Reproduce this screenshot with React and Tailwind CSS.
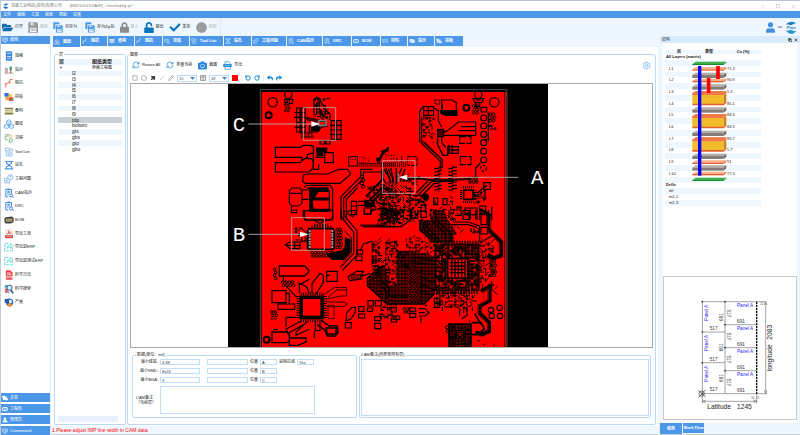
import React, { useState } from 'react';
import { FaFolderOpen, FaLock, FaUnlock, FaCheck, FaCircle, FaUser, FaReply, FaShare, FaCamera } from 'react-icons/fa';
import { Settings, RotateCcw, RotateCw, RefreshCw, Pencil, Square, Circle, ArrowUpRight, X, Minus, Copy } from 'lucide-react';

const MENUS = ['文件', '编辑', '工具', '报表', '帮助', '设置'];

const SIDE_ITEMS = [
  ['spec', '规格'],
  ['guide', '指示'],
  ['imp', '阻抗'],
  ['panel', '拼板'],
  ['stack', '叠构'],
  ['layer', '图纸'],
  ['flow', '流程'],
  ['tool', 'Tool List'],
  ['drill', '钻孔'],
  ['eq', '工程问题'],
  ['clip', 'CAM指示'],
  ['clip', 'DRC'],
  ['bom', 'BOM'],
  ['pdf', '导出工单'],
  ['share', '导出到ERP'],
  ['share', '导出到测试ERP'],
  ['log', '料号日志'],
  ['search', '料号搜索'],
  ['yield', '产量'],
];

const SIDE_GROUPS = [
  ['panel', '会签'],
  ['bom', '工程库'],
  ['user', '管理员'],
  ['monitor', 'Customized'],
];

const TABS = [
  { icon: 'layer', label: '图纸', width: 'w-[27px]' },
  { icon: 'imp', label: '阻抗', width: 'w-[26px]' },
  { icon: 'stack', label: '叠构', width: 'w-[26px]' },
  { icon: 'imp', label: '阻抗', width: 'w-[27px]' },
  { icon: 'flow', label: '流程', width: 'w-[26px]' },
  { icon: 'tool', label: 'Tool List', width: 'w-[33px]' },
  { icon: 'drill', label: '钻孔', width: 'w-[27px]' },
  { icon: 'eq', label: '工程问题', width: 'w-[34px]' },
  { icon: 'clip', label: 'CAM指示', width: 'w-[35px]' },
  { icon: 'clip', label: 'DRC', width: 'w-[28px]' },
  { icon: 'bom', label: 'BOM', width: 'w-[28px]' },
  { icon: 'mat', label: '材料', width: 'w-[26px]' },
  { icon: 'flag', label: '指示', width: 'w-[26px]' },
  { icon: 'panel', label: '拼板', width: 'w-[28px]' },
];

const LAYERS = ['l2', 'l3', 'l4', 'l5', 'l6', 'l7', 'l8', 'l9', 'top', 'bottom', 'gts', 'gbs', 'gto', 'gbo'];

const COPPER = ['71.3', '90.9', '5.3', '85.1', '84.3', '84.3', '85.7', '5.7', '91', '77.3'];

const BLUE = '#4d97e8';

/* Shapes for the small module icons, 27 x 27. `mono` draws them in one colour for the tab strip. */
function ModIcon({ name, mono, className }) {
  const c = (color) => mono || color;
  const shapes = {
    spec: (
      <g>
        <rect x="5" y="1" width="17" height="25" rx="2" fill={c('#3b86e0')} />
        <path d="M8 6h11M8 15h11" stroke="#cfe4fb" strokeWidth="3" />
        <path d="M8 20h11" stroke="#fff" strokeWidth="1.5" />
      </g>
    ),
    guide: (
      <g>
        <path d="M4 5v17M1 22h25" stroke={c('#9a9a9a')} strokeWidth="2" />
        <path d="M8 8v14" stroke={c('#c98f8f')} strokeWidth="4" />
        <path d="M15 4h6v11h-6z" fill={c('#3f9a86')} />
        <path d="M18 14v9" stroke={c('#b35a5a')} strokeWidth="3" />
      </g>
    ),
    imp: (
      <g fill="none" stroke={c('#f0564a')} strokeWidth="2.5" strokeLinecap="round">
        <path d="M5 25c2-5-3-7 1-10l8-3 3-8h5" />
        <path d="M12 12l5 2M3 16h3" />
      </g>
    ),
    panel: (
      <g>
        <rect x="1" y="3" width="12" height="10" rx="2" fill={c('#3b6fe0')} />
        <rect x="13" y="6" width="8" height="8" fill={c('#f7c52c')} />
        <rect x="4" y="13" width="9" height="9" fill={c('#f7a72c')} />
        <rect x="13" y="14" width="12" height="10" rx="2" fill={c('#e2474b')} />
        <rect x="20" y="17" width="5" height="5" fill={c('#40b25f')} />
      </g>
    ),
    stack: (
      <g>
        <path d="M2 5h23v4H2zM2 19h23v4H2z" fill={c('#7d7f45')} />
        <path d="M2 10h23v3H2zM2 15h23v3H2z" fill={c('#b7ad5e')} />
      </g>
    ),
    layer: (
      <g fill="none" stroke={c(BLUE)} strokeWidth="2">
        <path d="M13 2l6 4v7l-6 3-6-3V6zM7 13l6 4v6l-6 3-6-3v-6zM20 13l6 4v6l-6 3-6-3v-6z" />
        <path d="M7 6l6 3 6-3M13 9v7M1 17l6 3 6-3M14 17l6 3 6-3" strokeWidth="1.5" />
      </g>
    ),
    flow: (
      <g fill="none" strokeWidth="2.5">
        <path d="M2 5h12M8 5v5H3v8h8" stroke={c('#7ab88a')} />
        <circle cx="17" cy="9" r="4" stroke={c('#e7b76a')} />
        <path d="M14 18l5-3 5 4-3 5-6 1z" stroke={c('#62b57c')} />
      </g>
    ),
    tool: (
      <g fill="none" stroke={c('#79b1ec')} strokeWidth="2">
        <path d="M3 3h12v7H3zM6 10v14h8M15 13l5-9 4 3-3 8" />
        <circle cx="18" cy="20" r="5" />
        <path d="M9 14h4M9 19h4M16 20h4" />
      </g>
    ),
    drill: (
      <g fill="none" stroke={c(BLUE)} strokeWidth="3">
        <path d="M2 4h23M2 24h23M7 5v4l5 3v4l-6 3v4M20 5v4l-5 3v4l6 3v4" />
      </g>
    ),
    eq: (
      <g fill="none" stroke={c('#6fa8e0')} strokeWidth="2">
        <circle cx="17" cy="9" r="7" />
        <path d="M14 7c2-4 7-1 4 2l-1 3M10 12H2v12h13v-7M5 17h6M5 20h4" />
      </g>
    ),
    clip: (
      <g fill="none" stroke={c('#2f7fe0')} strokeWidth="2.5">
        <path d="M12 24H5V4h15v11M9 3h7M9 9h7M9 13h7M9 17h3" />
        <circle cx="19" cy="20" r="4" />
        <path d="M22 23l4 3" />
      </g>
    ),
    bom: (
      <g>
        <path d="M4 6l18-2 4 5v10l-7 4H4l-3-4v-9z" fill={c('#3f4a48')} />
        <path d="M5 10h17v8H5z" fill={mono ? BLUE : '#d6a05a'} />
        <path d="M8 12h4v4H8zM15 12h4v4h-4z" fill={c('#2f9aa8')} />
      </g>
    ),
    pdf: (
      <g>
        <path d="M5 1h12l6 6v19H5z" fill="#f3eaea" stroke="#c9bcbc" />
        <path d="M9 13c5-2 6-9 4-8s2 8 7 7c-4-2-8 0-11 1z" fill="none" stroke="#d54a45" strokeWidth="2" />
        <path d="M3 17h21v7H3z" fill="#cf3733" />
        <path d="M7 20h13" stroke="#fff" strokeWidth="2" strokeDasharray="3 2" />
      </g>
    ),
    share: (
      <g fill="none" stroke="#3fd2d2" strokeWidth="2">
        <path d="M12 4H2v20h21v-9" strokeDasharray="9 2" />
        <path d="M9 17c0-7 4-9 9-9V4l7 7-7 6v-4c-4 0-6 1-9 4z" />
      </g>
    ),
    log: (
      <g>
        <path d="M5 1h12l6 6v19H5z" fill="#e8474b" />
        <path d="M8 8h10M8 12h12" stroke="#fff" strokeWidth="2" />
        <path d="M3 16h22v6H3z" fill="#fbdcdc" />
        <path d="M6 19h15" stroke="#d8383c" strokeWidth="2" />
      </g>
    ),
    search: (
      <g>
        <path d="M2 3h9v7H2z" fill="#38b0b8" />
        <path d="M3 12h7v12H3z" fill="#e4574f" />
        <circle cx="15" cy="10" r="7" fill="#d9f0fb" stroke="#23528f" strokeWidth="2.5" />
        <path d="M18 16l7 9" stroke="#23528f" strokeWidth="4" />
        <path d="M10 18l4 7" stroke="#4d97e8" strokeWidth="3" />
      </g>
    ),
    yield: (
      <g>
        <circle cx="15" cy="14" r="10" fill="#2e6fb5" />
        <path d="M15 14L8 24a12 12 0 0 0 15-2z" fill="#f0932c" />
        <path d="M2 5h10v11H2z" fill="#31589a" />
        <path d="M14 8h7v8h-7z" fill="#e7eef6" />
      </g>
    ),
    user: (
      <g fill={c(BLUE)}>
        <circle cx="13" cy="8" r="6" />
        <path d="M2 24c0-9 6-9 11-9s12 0 12 9z" />
      </g>
    ),
    monitor: (
      <g fill="none" stroke={c(BLUE)} strokeWidth="2">
        <path d="M2 4h23v14H2zM8 24h11M13 18v6M6 9h8M6 13h5" />
        <circle cx="18" cy="11" r="3" />
      </g>
    ),
    mat: (
      <path d="M3 5v16M8 5v16M3 8h5M3 17h5M13 3v20M18 5v16M24 5v16M18 8h6M18 17h6" fill="none" stroke={c(BLUE)} strokeWidth="2" />
    ),
    flag: <path d="M2 4h16l3 4h5v14H10l-2-3H2z" fill={c(BLUE)} />,
  };
  return <svg viewBox="0 0 27 27" className={className} aria-hidden="true">{shapes[name]}</svg>;
}

function DiskIcon({ color, double }) {
  return (
    <svg viewBox="0 0 30 33" className="h-[11px] w-[10px] shrink-0" aria-hidden="true">
      {double && <path d="M1 1h18v6H7v14H1z" fill={color} />}
      <g transform={double ? 'translate(8 9) scale(.7)' : 'translate(0 0)'}>
        <path d="M1 1h25l4 4v27H1z" fill={color} />
        <path d="M8 2h13v8H8zM6 17h19v13H6z" fill="#eef7ff" />
        <path d="M16 3h3v6h-3zM9 21h13M9 25h13" fill={color} stroke={color} strokeWidth="2" />
      </g>
    </svg>
  );
}

function BrandLogo() {
  return (
    <svg viewBox="0 0 36 39" className="h-[13px] w-[12px]" aria-hidden="true">
      <path d="M3 12C8 0 28-1 34 8c-8-3-12 6-20 4-5-1-8-2-11 0z" fill="#1f7fc4" />
      <path d="M3 28c6 14 25 13 31 1-8 4-12-4-19-2-5 2-8 3-12 1z" fill="#2b93cf" />
      <text x="18" y="25" textAnchor="middle" fontSize="13" fontWeight="bold" fill="#2b7fc0">Plan</text>
    </svg>
  );
}

function AppMark() {
  return (
    <svg viewBox="0 0 18 18" className="h-[6px] w-[6px]" aria-hidden="true">
      <path d="M2 7C3 1 13 0 17 4c-4 0-6 4-9 3S4 6 2 7zM1 11c2 8 13 8 16 2-4 1-5-2-8-2s-5 2-8 0z" fill="#1d74bd" />
      <path d="M2 8h8v2H2z" fill="#1d74bd" />
    </svg>
  );
}

/* ---------- Board artwork ---------- */

function makeRandom(seed) {
  let s = seed;
  return () => {
    s = (s * 16807) % 2147483647;
    return s / 2147483647;
  };
}

// Dense fan-out area: vias, pads and short tracks on a coarse grid
function Scatter({ x, y, w, h, seed, density = 0.8, step = 9, color = '#000' }) {
  const rand = makeRandom(seed);
  let d = '';
  for (let py = y; py < y + h; py += step) {
    for (let px = x; px < x + w; px += step) {
      const r = rand();
      const k = rand();
      if (r > density) continue;
      if (k < 0.3) d += `M${px} ${py}h5v5h-5z`;
      else if (k < 0.5) d += `M${px} ${py}l${step} ${step}`;
      else if (k < 0.7) d += `M${px} ${py}l${step} ${-step}`;
      else if (k < 0.85) d += `M${px} ${py}v${step + 3}`;
      else d += `M${px} ${py}h${step + 4}`;
    }
  }
  return <path d={d} stroke={color} strokeWidth="3" fill="none" />;
}

function Vias({ x, y, cols, rows, step = 10, r = 4, width = 3 }) {
  const list = [];
  for (let j = 0; j < rows; j++) {
    for (let i = 0; i < cols; i++) {
      list.push(<circle key={`${i}-${j}`} cx={x + i * step + (j % 2) * 3} cy={y + j * step} r={r} />);
    }
  }
  return <g fill="none" stroke="#000" strokeWidth={width}>{list}</g>;
}

function BoardTopLeft() {
  return (
    <g transform="translate(-6 -12)" fill="none" stroke="#000" strokeWidth="3.5">
      <circle cx="140" cy="67" r="14" />
      <circle cx="128" cy="106" r="9" strokeWidth="6" />
      <circle cx="187" cy="44" r="11" />
      <path d="M174 58h28M176 58v10h8v-8M190 60v10h10v-10" />
      <Vias x={178} y={74} cols={2} rows={3} step={9} r={3} />
      <path d="M212 84h10v72h-10zM226 84h12v72h-12zM204 112h34M206 98h30M206 142h30M212 128h26" />
      <path d="M264 104V60l8-8 10 4 4 14 12 10M272 104V70l8-4v20l14 20M280 100l22 14M262 76h20M290 82l22 20v18M298 76v30" strokeWidth="4" />
      <path d="M236 112l44 12h20v10l-20 4h-30v18h24l12-14 20-4" />
      <path d="M240 112l40 8v6l-36-6z" fill="#500" stroke="#300" />
      <path d="M256 136h24v16h-24z" fill="#000" />
      <Scatter x={264} y={56} w={44} h={60} seed={31} density={0.6} />
      <Vias x={226} y={160} cols={4} rows={2} step={10} r={3} />
      <path d="M316 122h12v56h-12zM332 122h13v56h-13zM312 136h36M312 150h36M312 164h36" />
      <path d="M282 182h14v10h-14zM300 182h12v10h-12z" />
      <path d="M148 202H224L232 196H255L263 204V218L244 224V232L228 240V232H148Z" />
      <path d="M148 248H222L236 236H256L262 244V262L250 276H148Z" />
      <path d="M262 196v72h16v-16M268 232h26M296 218h26v30h-26z" />
      <path d="M272 204h30v10h-12v14h-16z" fill="#000" />
      <path d="M232 286L240 282H306L338 268H364L372 276V284L342 310H238L230 304Z" />
      <path d="M368 230h26v28h-26z" strokeWidth="3" />
      <path d="M372 238h20M400 232h14v16h-14M418 236h10v10" strokeWidth="2" strokeDasharray="4 3" />
      <path d="M190 332l8-8h24l6 10v36l-10 8h-20l-8-8zM196 380v18h18M190 340h38M226 330h20M228 358h20" />
      <path d="M234 322l8-6h70l8 10v64h-10v-56l-6-10h-62" />
      <path d="M250 324h56v10h-30l-12 20h44v6h-50l4 28h46v6h-56z" fill="#000" />
      <path d="M236 392h84v28h-84z" />
      <path d="M345 420V350L404 290V268H440M353 420V354L412 296V276H466M361 420V358L396 322" />
      <path d="M398 256h80" strokeWidth="12" stroke="#400" strokeDasharray="3 3" />
      <path d="M398 250h112M478 256h32" strokeWidth="2" />
      <path d="M452 244L488 202M458 248L474 214M450 236h14M470 212h18" strokeWidth="5" />
      <path d="M480 222v20M488 226h18M494 236h14" strokeDasharray="3 4" />
      <path d="M420 350L468 300V268M430 360L474 320M440 364l30-30" strokeWidth="6" />
      <path d="M476 266c0 20 20 20 18 44M488 266c0 20 16 24 14 40M470 270v24l10 16" strokeWidth="4" />
      <Vias x={408} y={290} cols={1} rows={4} r={5} />
      <Scatter x={424} y={318} w={40} h={40} seed={19} density={0.9} />
      <Scatter x={462} y={314} w={48} h={104} seed={7} density={0.95} />
      <path d="M376 364h16v40h-16zM376 378h18M370 392h20M396 364h20v12h-20M414 384h22v18h-22zM420 362h24v16h-24z" />
      <path d="M418 360l14 10 12-10v20h-26z" fill="#000" />
      <Scatter x={440} y={360} w={26} h={30} seed={77} />
    </g>
  );
}

function BoardTopRight() {
  return (
    <g transform="translate(459 -12)" fill="none" stroke="#000" strokeWidth="3.5">
      <circle cx="340" cy="67" r="14" />
      <circle cx="256" cy="83" r="9" strokeWidth="6" />
      <circle cx="292" cy="44" r="11" />
      <path d="M276 56h32l-6 12h-20zM284 60h16M284 68v12h12V66" />
      <Vias x={278} y={78} cols={2} rows={3} r={4} />
      <path d="M300 82h17v14h-17z" />
      {[114, 138, 163, 188, 214, 240].map((cy) => <circle key={cy} cx="308" cy={cy} r="9" />)}
      <circle cx="308" cy="265" r="9" strokeDasharray="8 5" />
      <Vias x={328} y={102} cols={2} rows={3} r={4} />
      <Vias x={332} y={146} cols={2} rows={1} r={3} />
      <path d="M322 98v84M318 176l-8 8M322 138h14" strokeWidth="4" />
      <path d="M162 60h14v12h-14z" strokeDasharray="5 3" />
      <path d="M128 80h30v26h-30zM128 92h30M142 80v26" />
      <path d="M126 80l-10 14v90l62 60v28M132 108l-10 8v66l62 58v24" />
      <path d="M130 186l54 54v20" strokeWidth="5" stroke="#300" />
      <path d="M182 60h32l12 8v34h-44zM184 72v20" />
      <path d="M178 92h50v14h-34l-14-6z" fill="#000" />
      <path d="M160 84l12 8v30l10 20" />
      <path d="M284 126H232L200 152 178 160M284 166H232L180 166M284 126v40M240 140h44M232 152h52" />
      <path d="M170 148h18v22h-18z" fill="#400" />
      <Scatter x={126} y={112} w={36} h={62} seed={5} density={0.8} />
      <path d="M236 170h34v20h-34zM238 230h32v24h-32z" strokeDasharray="20 4" />
      <path d="M170 172v22l16 32h14v-26h32v20h-28M182 172v16l12 14M204 194v28M214 194v28M200 210h34" strokeWidth="4" />
      <Vias x={156} y={188} cols={2} rows={1} r={1} width={2} />
      {[266, 276, 286, 296, 310, 320, 330].map((y) => (
        <path key={y} d={`M160 ${y}h10l4-4h8M202 ${y}h10l4-4h12`} />
      ))}
      <path d="M174 260v76M214 256v78" strokeWidth="2" />
      <path d="M74 296h50l20 4h74l50-4" strokeWidth="6" stroke="#200" />
      <path d="M112 344l40-40h66M118 352l42-42M106 338l34-34" strokeWidth="4" />
      <path d="M284 292v-28l14-14M272 292h16v12" strokeWidth="4" />
      <Vias x={264} y={296} cols={3} rows={2} r={4} />
      <path d="M248 330h28v28h-28z" strokeWidth="5" />
      <path d="M240 330v30M284 330v30M246 322h32M246 366h32" strokeWidth="6" strokeDasharray="3 3" />
      <path d="M308 308h20v20h-20zM318 316l-30 24M312 330v20" strokeWidth="4" />
      <Scatter x={280} y={336} w={36} h={40} seed={14} density={0.8} />
      <path d="M158 354h12v20h-12zM166 372l-8-10M186 356h12v18h-12zM208 350l8 4M206 364h8v10" />
      <path d="M100 360h18l16 14v20h-20l-14 20M96 346h30" strokeWidth="4" />
      <path d="M124 350c8-14 20-8 18 4s-14 8-18-4z" fill="#000" />
      <Scatter x={84} y={346} w={52} h={74} seed={42} density={0.55} />
      <path d="M80 230h28v26h-28zM62 228v22M48 234v10" strokeWidth="3" strokeDasharray="12 3" />
      <path d="M0 254h76" strokeWidth="14" stroke="#400" strokeDasharray="3 3" />
      <path d="M0 224l22-20M0 216l14-6" strokeWidth="5" />
      <path d="M16 264c0 22 14 20 10 44M30 264c0 20 12 24 4 44M46 264v44M62 264c0 16-20 20-14 40M72 266l-14 40" strokeWidth="4" />
      <Scatter x={4} y={316} w={84} h={104} seed={99} density={0.85} />
      <Scatter x={66} y={290} w={50} h={22} seed={8} density={0.7} />
      <Scatter x={148} y={388} w={44} h={32} seed={17} density={0.95} />
      <Scatter x={200} y={380} w={40} h={40} seed={28} density={0.6} />
      <path d="M252 384h16v16h-16zM270 384h18v36M296 378h18v14h-18zM296 400h20v18h-20zM248 404h18v16" />
      <path d="M332 380v40M322 390v30" strokeWidth="4" />
    </g>
  );
}

function BoardBottomLeft() {
  return (
    <g transform="translate(-6 378)" fill="none" stroke="#000" strokeWidth="3.5">
      <path d="M232 0v22l8 8h70l10-8V0M262 30l20 10 20-10" />
      <path d="M196 0h16v8" />
      <path d="M248 56h74v62h-74z" fill="#f00" strokeWidth="5" />
      <path d="M248 60v56M322 60v56" stroke="#000" strokeWidth="12" />
      <path d="M251 60v56M319 60v56" stroke="#999" strokeWidth="6" strokeDasharray="6 2" />
      <path d="M256 50h60M264 44h42" strokeWidth="6" strokeDasharray="4 4" />
      <Vias x={334} y={58} cols={2} rows={7} step={9} r={4} />
      <Scatter x={208} y={54} w={36} h={40} seed={61} density={0.6} />
      <path d="M178 104l14-8h30v20h-30zM206 96v20M180 106h40" />
      <path d="M304 132l46-10 8-14V84l14 6v36l-20 22h-34z" fill="#000" />
      <path d="M356 62l20 22v44l-24 26" strokeWidth="3" />
      <Vias x={258} y={128} cols={7} rows={2} step={10} r={4} />
      <path d="M345 0V20L383 66V130L343 172M354 0V16L393 62V136L350 180" />
      <path d="M366 0v12l14 8 10-12M416 0v12h18V0" />
      <path d="M402 46h70l20-14h20M410 50h100" strokeWidth="5" stroke="#300" />
      <Scatter x={456} y={2} w={56} h={40} seed={12} density={0.95} />
      <path d="M402 124l10-22 26-8M392 120h18v12h-18zM390 138h18v14h-18z" />
      <Scatter x={438} y={92} w={20} h={110} seed={3} density={1} />
      <Scatter x={484} y={94} w={28} h={90} seed={4} density={0.8} />
      <path d="M424 204L462 170H484L512 182V284H486L424 228Z" fill="url(#dense)" />
      <Scatter x={438} y={150} w={50} h={64} seed={55} density={0.7} />
      <path d="M366 200l26-16h20l-10 24-30 4zM402 200l30-10" />
      <Vias x={376} y={196} cols={4} rows={2} step={9} r={3} />
      <path d="M160 168h76l12 12v6l-12 12H160z" strokeWidth="4" />
      <Vias x={146} y={178} cols={1} rows={4} step={9} r={4} />
      <Vias x={170} y={216} cols={4} rows={2} step={10} r={4} />
      <path d="M302 184h32v30h-32zM302 196h10M172 198v14" />
      <path d="M222 258h70v68h-70z" fill="#000" />
      <path d="M231 267h52v50h-52z" fill="#f00" stroke="none" />
      <path d="M224 252h68M224 332h68" strokeWidth="9" strokeDasharray="3 4" />
      <path d="M216 258v70M298 258v70" strokeWidth="9" strokeDasharray="3 4" />
      <path d="M138 242h42v36h-42zM180 250h10v30M156 282h50v16h-50zM180 322h30M180 322v28" />
      <path d="M258 250v-30l24-30 10 6v22l-22 34M250 250l-8-20-26-12M220 250v-26l30-16M212 262l-30-32" />
      <path d="M290 256l36-24h36v8h-30l-26 22M300 268l44-10h18v-18M302 276h52l10 6-12 8h-50" strokeWidth="2.5" />
      <path d="M306 286h18v40h-18z" strokeWidth="2" />
      <path d="M226 332l-46 26 6 12 46-26M244 334l-34 32v10l40-18M268 334v28h14v-26M265 384v-20" />
      <path d="M284 330l26 18h24l2 20-8 10h-24l-8-18-22-16M300 354h30v18h-26z" strokeWidth="4.5" />
      <path d="M362 308l16-16h10v14l-14 22-14 4zM358 338h18v16h-18zM398 290h16v14h-16zM398 312h18v12h-18z" />
      <path d="M426 272h16v16h-16zM448 272h18v16h-18zM424 294h16v10h-16zM446 320h18v12h-18zM446 340h18v16h-18zM496 324h16v12h-16z" />
      <Scatter x={462} y={292} w={44} h={36} seed={71} density={0.7} />
      <Vias x={138} y={306} cols={2} rows={2} step={10} r={4} />
      <Vias x={138} y={326} cols={2} rows={1} step={10} r={3} width={2} />
      <path d="M138 366h44l8 8v18l-8 6h-44zM142 358h14M190 384h50v12l-24 10H190z" strokeWidth="4" />
      <circle cx="122" cy="389" r="9" strokeWidth="6" />
    </g>
  );
}

function BoardBottomRight() {
  return (
    <g transform="translate(459 378)" fill="none" stroke="#000" strokeWidth="3.5">
      <Scatter x={0} y={0} w={72} h={44} seed={23} density={0.95} />
      <path d="M0 50h62l26-20V0M92 0v24h18V0" strokeWidth="4" />
      <path d="M120 0v22h16V0M204 0v24M246 2h18v26h-18zM268 0v28M284 0v28M222 0h18v16h-18M250 14h36" />
      <path d="M114 32L150 30l10-30 30 0 10 28 18 26v44h-56L114 62Z" fill="url(#dense)" stroke="none" />
      <path d="M118 32v28l44 40M128 32v24l44 42M138 30v22l42 44M150 30l44 40v24M162 0l4 30 42 40v26M148 14l8 24" strokeWidth="4" />
      <path d="M216 36h46l34 12v46M212 44h50l26 8" />
      <path d="M296 0l28 16v44l36 36v40l-24 8-16-10" strokeWidth="13" />
      <path d="M298 4l22 14v44l36 38v32l-20 6M328 18v38l36 36" strokeWidth="2.5" stroke="#a00" />
      <path d="M300 14h18v30h-18z" fill="#f00" />
      <path d="M300 52h20v20h-20zM296 100l40-24" />
      <Scatter x={220} y={50} w={22} h={30} seed={88} density={0.5} />
      <Scatter x={270} y={54} w={26} h={26} seed={89} density={0.6} />
      <Scatter x={76} y={84} w={92} h={58} seed={44} density={0.75} color="#200" />
      <path d="M0 172l22 8V136l22-14h52l66 20v108l-32 32H20L0 268Z" fill="url(#dense)" stroke="none" />
      <path d="M4 214l20 20v24h60M4 230l12 12v26M0 268l20 14h110l32-32M96 142l66 10M100 158l62 6M120 200l44 22M118 220l44 22M120 240l36 18" strokeWidth="4" />
      <path d="M82 172h38v108H82z" fill="#900" stroke="none" />
      <Vias x={87} y={176} cols={4} rows={11} step={10} r={4} />
      <path d="M14 96h32v130H24l-10-50z" fill="#e00" stroke="none" />
      <Scatter x={14} y={96} w={34} h={130} seed={9} density={0.85} />
      <Scatter x={50} y={126} w={46} h={46} seed={91} density={0.8} />
      <path d="M162 102h132v140H162z" fill="url(#dense)" strokeWidth="3" />
      <Scatter x={166} y={106} w={124} h={134} seed={101} density={0.95} step={8} />
      <Scatter x={168} y={108} w={120} h={130} seed={202} density={0.4} step={10} color="#f00" />
      <path d="M200 146h60v58h-60z" fill="#f00" strokeWidth="5" />
      <path d="M206 158h48M206 168h48M206 178h48M206 188h48M212 150v50M222 150v50M232 150v50M242 150v50M252 150v50" strokeWidth="4" />
      <path d="M162 96h132M166 248h126" strokeWidth="8" strokeDasharray="4 4" />
      <Scatter x={296} y={96} w={40} h={130} seed={66} density={0.85} color="#200" />
      <Vias x={330} y={156} cols={2} rows={5} step={10} r={4} />
      <Scatter x={332} y={228} w={26} h={24} seed={67} density={0.6} />
      <Scatter x={166} y={246} w={112} h={54} seed={33} density={0.9} />
      <path d="M160 264h16v12h-16zM160 280h16v12h-16zM236 296v22M258 290v26l-16 10M248 290v20" />
      <path d="M300 244l26-14v42l-30 16v22l28 28v26l-22 10-18-8" strokeWidth="12" />
      <path d="M302 248l20-12v34l-30 16v24l28 30v18l-20 8M308 250v18M296 300l28 28" strokeWidth="2.5" stroke="#900" />
      <circle cx="330" cy="300" r="8" />
      <circle cx="356" cy="293" r="8" />
      <circle cx="332" cy="318" r="8" />
      <circle cx="357" cy="318" r="8" />
      <path d="M282 310c0 10 14 18 18 34M272 338h28l10 18-18 18h-22" strokeWidth="5" />
      <path d="M204 342h66v70h-66z" fill="url(#dense)" strokeWidth="5" />
      <Scatter x={206} y={344} w={60} h={60} seed={18} density={0.8} />
      <path d="M226 362h22v22h-22z" fill="#900" />
      <circle cx="237" cy="373" r="7" />
      <Vias x={198} y={352} cols={1} rows={2} step={11} r={5} />
      <path d="M4 292h16v12M0 310l16 12 14-10M30 292h16v14h-16zM34 318h22v10h-22M86 294h18v10h-18zM86 310h18v12h-18zM112 296h20l12 12-12 10h-20M114 308h18M120 322v18" />
      <Vias x={70} y={296} cols={2} rows={2} step={10} r={4} />
      <path d="M132 286h6M264 334h4M290 392h6M306 404h4M338 406h4" />
    </g>
  );
}

function BoardView() {
  return (
    <svg viewBox="0 0 960 789" className="h-full" role="img" aria-label="top">
      <defs>
        <pattern id="dense" width="10" height="10" patternUnits="userSpaceOnUse">
          <rect width="10" height="10" fill="#660000" />
          <path d="M0 3h10M3 0v10" stroke="#100" strokeWidth="3" />
          <rect x="6" y="6" width="3" height="3" fill="#a00" />
        </pattern>
      </defs>
      <rect width="960" height="789" fill="#000" />
      <path d="M97 789V17h740v772" fill="none" stroke="#777" strokeWidth="2" />
      <rect x="101" y="24" width="734" height="765" fill="#f00" />
      <path d="M830 24v765" stroke="#000" strokeWidth="2.5" />
      <BoardTopLeft />
      <BoardTopRight />
      <BoardBottomLeft />
      <BoardBottomRight />

      {/* Measured positions */}
      <g fill="none" stroke="#c9a5a5" strokeWidth="2.5">
        <path d="M226 71h97v98h-97zM464 230h97v98h-97zM191 401h98v98h-98z" />
        <path d="M61 120h195M540 280h331M61 451h160" stroke="#bbb" />
        <path d="M272 110h22v14h-22zM511 268v26" stroke="#777" strokeWidth="5" />
      </g>
      <path d="M250 112l26 8-26 8zM512 280l26-8v16zM216 443l26 8-26 8z" fill="#fff" />
      <g fill="#fff" fontSize="62" fontFamily="'Liberation Mono', monospace">
        <text x="14" y="142">C</text>
        <text x="909" y="300">A</text>
        <text x="14" y="472">B</text>
      </g>
    </svg>
  );
}

/* ---------- Stack-up ---------- */

function Plate({ y, h, top, front, side }) {
  return (
    <g>
      <path d={`M127 ${y}L138 ${y - 7}H229L221 ${y}Z`} fill={top} />
      <path d={`M127 ${y}H221V${y + h}H127Z`} fill={front} />
      <path d={`M221 ${y}L229 ${y - 7}V${y + h - 7}L221 ${y + h}Z`} fill={side} />
    </g>
  );
}

function StackDrawing() {
  return (
    <svg viewBox="126 93 105 363" className="absolute left-[27px] top-[11px] h-[121px] w-[35px]" aria-hidden="true">
      {[102, 450].map((y) => <Plate key={y} y={y} h={3} top="#3fae4d" front="#1f8a35" side="#2b9a40" />)}
      {[118, 153, 398, 432].map((y) => <Plate key={y} y={y} h={4} top="#f7b08a" front="#e3602c" side="#d9552a" />)}
      {[135, 170, 239, 309, 378, 413].map((y) => <Plate key={y} y={y} h={9} top="#b5aea6" front="#857d75" side="#6e675f" />)}
      {[190, 259, 329].map((y) => (
        <g key={y}>
          <Plate y={y} h={5} top="#f59a70" front="#e8622c" side="#d9552a" />
          <Plate y={y + 5} h={27} top="#f59a70" front="#f2bb2c" side="#c98a1c" />
          <path d={`M127 ${y + 5}V${y}L138 ${y - 7}H229L221 ${y + 5}Z`} fill="#ee7a48" />
          <path d={`M127 ${y + 31}H221L229 ${y + 24}V${y + 29}L221 ${y + 36}H127Z`} fill="#e3602c" />
        </g>
      ))}
      <path d="M149 108V437" stroke="#00f" strokeWidth="10" />
      <path d="M204 108V147M176 144V189" stroke="#f00" strokeWidth="11" />
    </svg>
  );
}

function StackTable() {
  const rows = [{ bold: true, name: 'All Layers (matrix)' }, {}];
  COPPER.forEach((cu, i) => {
    rows.push({ name: `L${i + 1}`, cu });
    if (i < COPPER.length - 1) rows.push({});
  });
  rows.push({}, { bold: true, name: 'Drills' }, { name: 'drl' }, { name: 'm1-2' }, { name: 'm2-3' });

  return (
    <div className="relative w-[96px]">
      <table className="h-[156px] w-full table-fixed border-collapse leading-[4px]">
        <thead>
          <tr className="bg-[#eef6fe]">
            <th className="w-[28px] p-0">层</th>
            <th className="w-[32px] p-0">类型</th>
            <th className="p-0">Cu (%)</th>
          </tr>
        </thead>
        <tbody>
          {rows.map((row, i) => (
            <tr key={i} className={i % 2 ? 'bg-[#eef6fe]' : 'bg-white'}>
              <td className={`whitespace-nowrap p-0 ${row.bold ? 'pl-px font-bold' : 'pl-[4px]'}`}>{row.name || '\u00a0'}</td>
              <td className="p-0" />
              <td className="p-0 pl-[2px]">{row.cu}</td>
            </tr>
          ))}
        </tbody>
      </table>
      <StackDrawing />
    </div>
  );
}

/* ---------- Panel drawing ---------- */

function PanelDrawing() {
  return (
    <svg viewBox="42 20 394 426" className="h-full w-full" role="img" aria-label="Panel A">
      <g fill="none" stroke="#777" strokeWidth="2">
        <path d="M156 94H346M156 94V400M224 94V370M156 370H350M156 185H224M156 277H224M224 163H319M224 232H319M224 301H319" />
        <path d="M346 94V370M156 393H319M319 370V400M342 104l4-10 4 10M342 360l4 10 4-10M166 389l-10 4 10 4M309 389l10 4-10 4" />
        <circle cx="154" cy="370" r="8" stroke="#333" />
        <path d="M144 360l22 20M166 358l-22 24" stroke="#333" />
      </g>
      <path d="M319 94V370" stroke="#111" strokeWidth="4" strokeDasharray="7 2" />
      <g fill="#333">
        {[94, 185, 277, 370].map((y) => <circle key={y} cx="156" cy={y} r="2.5" />)}
        {[94, 163, 232, 301].map((y) => <circle key={y} cx="224" cy={y} r="2.5" />)}
      </g>
      <g fontSize="14" textAnchor="middle" fill="#333">
        {[94, 185, 277].map((y) => (
          <g key={y}>
            <text x="190" y={y + 86}>517</text>
            <text transform={`translate(218 ${y + 46}) rotate(-90)`}>691</text>
            <text transform={`translate(172 ${y + 33}) rotate(-90)`} fill="#22f">Panel A</text>
          </g>
        ))}
        {[94, 163, 232, 301].map((y) => (
          <g key={y}>
            <text x="272" y={y + 63}>691</text>
            <text transform={`translate(231 ${y + 35}) rotate(90)`}>517</text>
            <text x="284" y={y + 17} fill="#22f">Panel A</text>
          </g>
        ))}
      </g>
      <g fontSize="10" fill="#555">
        <text x="302" y="387">10</text>
        <text x="321" y="387">9</text>
        <text x="329" y="104">12</text>
      </g>
      <g fontSize="20" fill="#222">
        <text x="171" y="415">Latitude</text>
        <text x="260" y="415">1245</text>
        <text transform="translate(365 303) rotate(-90)">longitude</text>
        <text transform="translate(365 208) rotate(-90)">2083</text>
      </g>
    </svg>
  );
}

/* ---------- Layout ---------- */

function TitleBar() {
  return (
    <header className="flex h-[11px] shrink-0 items-center border-t border-[#b9c4d6] bg-white pl-[2px] pr-[4px] text-[#777]">
      <AppMark />
      <span className="ml-[2px]">深盛工业科技(深圳)有限公司</span>
      <span className="ml-[8px]">[HSX1014113A0F] - checked by jzl *</span>
      <div className="ml-auto flex items-center gap-[11px] text-[#999]">
        <button aria-label="Minimize"><Minus className="h-[4px] w-[4px]" /></button>
        <button aria-label="Maximize"><Square className="h-[4px] w-[4px]" /></button>
        <button aria-label="Close"><X className="h-[5px] w-[5px]" /></button>
      </div>
    </header>
  );
}

function ToolButton({ icon, label, muted }) {
  return (
    <button className={`flex items-center gap-[2px] whitespace-nowrap ${muted ? 'text-[#aaa]' : 'text-[#222]'}`}>
      {icon}
      {label}
    </button>
  );
}

function MainToolbar() {
  return (
    <div className="flex h-[18px] shrink-0 items-center bg-[#eef7ff] pl-px pr-[3px]">
      <div className="flex h-full items-center gap-[5px] border-r border-[#dfe8f0] pr-[3px]">
        <ToolButton icon={<FaFolderOpen className="h-[11px] w-[11px] text-[#0d6fb0]" />} label="打开" />
        <ToolButton icon={<DiskIcon color="#999" />} label="保存" muted />
        <ToolButton icon={<DiskIcon color="#4d97e8" double />} label="另存为" />
        <i className="-mr-[3px] h-[12px] w-px bg-[#e3ecf4]" />
        <ToolButton icon={<DiskIcon color="#4d97e8" double />} label="存为Zip包" />
        <ToolButton icon={<FaLock className="h-[11px] w-[9px] text-[#8d8d8d]" />} label="登入" muted />
        <ToolButton icon={<FaUnlock className="h-[11px] w-[10px] text-[#0d76bb]" />} label="登出" />
        <ToolButton icon={<FaCheck className="h-[11px] w-[12px] text-[#0d76bb]" />} label="发布" />
        <ToolButton icon={<FaCircle className="h-[11px] w-[11px] text-[#9a9a9a]" />} label="召回" muted />
      </div>
      <div className="ml-auto flex items-center gap-[3px] text-[#444]">
        <FaUser className="h-[11px] w-[9px] text-[#4190dd]" />
        <span>sa</span>
        <BrandLogo />
      </div>
    </div>
  );
}

function Sidebar() {
  return (
    <aside className="flex w-[50px] shrink-0 flex-col border-r border-[#dcebfa] bg-white">
      <div className="flex h-[8px] shrink-0 items-center gap-[2px] bg-[#4d97e8] pl-px text-white">
        <ModIcon name="monitor" mono="#fff" className="h-[6px] w-[6px]" />
        编辑
      </div>
      <nav className="mt-[5px] flex h-[260px] shrink-0 flex-col">
        {SIDE_ITEMS.map(([icon, label]) => (
          <button key={label} className="flex flex-1 items-center gap-px whitespace-nowrap pl-[3px] text-[#222]">
            <ModIcon name={icon} className="h-[10px] w-[10px] shrink-0" />
            {label}
          </button>
        ))}
      </nav>
      <div className="mt-auto flex flex-col gap-[2px]">
        {SIDE_GROUPS.map(([icon, label]) => (
          <button key={label} className="flex h-[9px] items-center gap-[2px] bg-[#4d97e8] pl-px text-white">
            <ModIcon name={icon} mono="#fff" className="h-[6px] w-[6px]" />
            {label}
          </button>
        ))}
      </div>
    </aside>
  );
}

function LayerTree() {
  const [selected, setSelected] = useState('top');
  return (
    <fieldset className="flex w-[72px] shrink-0 flex-col rounded-[2px] border border-[#b9d9f8] px-[3px] pb-[2px]">
      <legend className="px-px leading-[5px]">层</legend>
      <div className="mt-[2px] flex h-[93px] flex-col text-[5px] leading-[5px]">
        <div className="flex flex-1 items-center bg-[#eef6fe] font-bold">
          <span className="w-[34px] pl-px">层</span>
          <span>图纸类型</span>
        </div>
        <div className="flex flex-1 items-center text-[4px]">
          <span className="w-[34px] pl-px">
            <svg viewBox="0 0 12 9" className="h-[3px] w-[4px]" aria-hidden="true"><path d="M1 2h10L6 8z" fill="#777" /></svg>
          </span>
          <span>原稿工程图</span>
        </div>
        {LAYERS.map((name, i) => (
          <button
            key={name}
            onClick={() => setSelected(name)}
            className={`flex flex-1 items-center pl-[14px] ${selected === name ? 'bg-[#c9d1d8]' : i % 2 ? 'bg-white' : 'bg-[#eef6fe]'}`}
          >
            {name}
          </button>
        ))}
      </div>
      <div className="mt-auto h-[6px] w-[60px] bg-[#e8f2fc]" />
    </fieldset>
  );
}

function MiniSelect({ label, value }) {
  return (
    <span className="relative flex">
      <select aria-label={label} defaultValue={value} className="h-[7px] w-[20px] appearance-none border border-[#b9d9f8] bg-white pl-px leading-[5px] text-[#555]">
        <option>{value}</option>
      </select>
      <svg viewBox="0 0 15 9" className="absolute right-[2px] top-[2px] h-[3px] w-[5px]" aria-hidden="true">
        <path d="M0 0h15L8 8z" fill="#3484dc" />
      </svg>
    </span>
  );
}

function ImageToolbar() {
  return (
    <>
      <div className="flex h-[16px] shrink-0 items-center gap-[6px] pl-[3px] pr-[3px]">
        <ToolButton icon={<RefreshCw className="h-[8px] w-[8px] text-[#1b8bd4]" />} label="Resore All" />
        <ToolButton icon={<RefreshCw className="h-[8px] w-[8px] text-[#1b8bd4]" />} label="重置当前" />
        <ToolButton icon={<FaCamera className="h-[9px] w-[9px] text-[#2f86d8]" />} label="截图" />
        <ToolButton
          icon={
            <svg viewBox="0 0 27 27" className="h-[9px] w-[9px]" aria-hidden="true">
              <path d="M6 9V2h11l5 5v2M6 18v7h16v-7" fill="none" stroke="#1b8bd4" strokeWidth="2" />
              <path d="M1 9h25v9H1z" fill="#1b8bd4" />
              <path d="M5 13h17" stroke="#fff" strokeWidth="2" strokeDasharray="3 2" />
            </svg>
          }
          label="导出"
        />
        <button aria-label="Settings" className="ml-auto">
          <Settings className="h-[9px] w-[9px] text-[#6fb0ee]" />
        </button>
      </div>
      <div className="flex h-[10px] shrink-0 items-center gap-[3px] pl-[3px] text-[#777]">
        <button aria-label="Rectangle"><Square className="h-[6px] w-[6px]" /></button>
        <button aria-label="Circle"><Circle className="h-[6px] w-[6px]" /></button>
        <button aria-label="Arrow"><ArrowUpRight strokeWidth={6} className="h-[6px] w-[6px] text-[#333]" /></button>
        <button aria-label="Line">
          <svg viewBox="0 0 18 18" className="h-[6px] w-[6px]"><path d="M2 16L16 2" stroke="#bbb" strokeWidth="2" /></svg>
        </button>
        <button aria-label="Pencil"><Pencil className="h-[6px] w-[6px]" /></button>
        <MiniSelect label="Line width" value="10" />
        <button aria-label="Text">
          <svg viewBox="0 0 18 18" className="h-[6px] w-[6px]"><path d="M2 2h14v14H2zM5 6h8M9 6v8" fill="none" stroke="#555" strokeWidth="2" /></svg>
        </button>
        <MiniSelect label="Font size" value="48" />
        <button aria-label="Color" className="h-[6px] w-[6px] bg-[#f00]" />
        <i className="h-[6px] w-px bg-[#eee]" />
        <button aria-label="Rotate left" className="text-[#1b8bd4]"><RotateCcw strokeWidth={4} className="h-[6px] w-[6px]" /></button>
        <button aria-label="Rotate right" className="text-[#1b8bd4]"><RotateCw strokeWidth={4} className="h-[6px] w-[6px]" /></button>
        <i className="h-[6px] w-px bg-[#eee]" />
        <button aria-label="Undo" className="text-[#1b8bd4]"><FaReply className="h-[6px] w-[6px]" /></button>
        <button aria-label="Redo" className="text-[#1b8bd4]"><FaShare className="h-[6px] w-[6px]" /></button>
      </div>
    </>
  );
}

const FIELD = 'h-[6px] border border-[#c3def9] bg-white pl-px leading-[4px] text-[#333]';

function DataRow({ label, value, position, children }) {
  return (
    <div className="flex items-center">
      <label className="flex items-center">
        <span className="w-[24px] whitespace-nowrap pr-[2px] text-right">{label}</span>
        <input className={`${FIELD} w-[40px]`} defaultValue={value} />
      </label>
      <input aria-label={`${label} 2`} className={`${FIELD} ml-[7px] w-[41px]`} />
      <label className="ml-[2px] flex items-center gap-[2px]">
        位置
        <input className={`${FIELD} w-[17px]`} defaultValue={position} />
      </label>
      {children}
    </div>
  );
}

function DataPanel() {
  return (
    <div className="mx-[3px] mt-[4px] flex gap-[2px]">
      <fieldset className="w-[225px] shrink-0 rounded-[2px] border border-[#b9d9f8] px-[3px] pb-[3px]">
        <legend className="px-px leading-[6px]">数据(单位：mil)</legend>
        <div className="flex flex-col gap-[3px] pt-px">
          <DataRow label="最小线宽:" value="3.38" position="A">
            <label className="ml-[2px] flex items-center gap-[2px]">
              是阻抗线
              <input className={`${FIELD} w-[17px]`} defaultValue="Yes" />
            </label>
          </DataRow>
          <DataRow label="最小SMD:" value="8x24" position="B" />
          <DataRow label="最小BGA:" value="9" position="C" />
          <label className="flex items-center">
            <span className="w-[24px] whitespace-nowrap pr-[2px] leading-[5px]">CAM备注<br />（当前层）</span>
            <textarea className="h-[28px] w-[155px] resize-none border border-[#c3def9]" />
          </label>
        </div>
      </fieldset>
      <fieldset className="flex min-w-0 flex-1 flex-col rounded-[2px] border border-[#b9d9f8] p-px">
        <legend className="leading-[6px]"><label htmlFor="cam-note">CAM备注(同类型所有层)</label></legend>
        <textarea id="cam-note" className="w-full flex-1 resize-none border border-[#c3def9]" />
      </fieldset>
    </div>
  );
}

function ImagePanel() {
  return (
    <fieldset className="flex min-w-0 flex-1 flex-col rounded-[2px] border border-[#b9d9f8] px-px pb-[6px]">
      <legend className="px-px leading-[5px]">图像</legend>
      <ImageToolbar />
      <div className="mx-px flex min-h-0 flex-1 justify-center border border-[#aaa] bg-white pr-[8px]">
        <div className="h-full">
          <BoardView />
        </div>
      </div>
      <DataPanel />
    </fieldset>
  );
}

function Workspace() {
  const [active, setActive] = useState(0);
  return (
    <main className="flex min-w-0 flex-1 flex-col">
      <div className="flex h-[11px] shrink-0 items-start gap-px bg-[#eef7ff] pl-[2px] text-white" role="tablist">
        {TABS.map((tab, i) => (
          <button
            key={i}
            role="tab"
            aria-selected={active === i}
            onClick={() => setActive(i)}
            className={`flex shrink-0 items-center gap-[3px] whitespace-nowrap bg-[#4d97e8] pl-px font-bold ${tab.width} ${active === i ? 'h-[11px]' : 'h-[10px]'}`}
          >
            <ModIcon name={tab.icon} mono="#d7e9fc" className="h-[6px] w-[6px] shrink-0" />
            {tab.label}
          </button>
        ))}
      </div>
      <div className="flex min-h-0 flex-1 gap-px bg-white pb-px pl-[3px] pr-[2px] pt-[5px]">
        <LayerTree />
        <ImagePanel />
      </div>
      <footer className="h-[9px] shrink-0 border-b border-[#ccc] bg-[#eef7ff] pl-px leading-[9px] text-[#f00]">
        <span className="text-[5px]">1.Please adjust IMP line width in CAM data.</span>
      </footer>
    </main>
  );
}

function StructureDock() {
  return (
    <aside className="flex w-[142px] shrink-0 flex-col bg-[#eef7ff] pl-[2px]">
      <div className="flex h-[7px] shrink-0 items-center bg-[#d8eafb] pl-[2px] pr-[2px]">
        结构
        <div className="ml-auto flex gap-[2px]">
          <button aria-label="Float"><Copy strokeWidth={4} className="h-[4px] w-[4px]" /></button>
          <button aria-label="Close"><X strokeWidth={4} className="h-[4px] w-[4px]" /></button>
        </div>
      </div>
      <div className="mx-[3px] flex flex-1 flex-col bg-white pt-[7px]">
        <div className="pl-[2px]">
          <StackTable />
        </div>
        <div className="mb-[3px] mt-auto h-[144px] border border-[#c9c9c9] bg-white">
          <PanelDrawing />
        </div>
      </div>
      <div className="flex h-[12px] shrink-0 gap-px border-b border-[#ccc] text-white">
        <button className="w-[22px] bg-[#4d97e8] font-bold">结构</button>
        <button className="h-[10px] w-[21px] whitespace-nowrap bg-[#4d97e8] font-bold">Work Flow</button>
      </div>
    </aside>
  );
}

export default function App() {
  return (
    <div className="flex h-screen flex-col overflow-hidden border-l border-[#c4ccd6] bg-[#eef7ff] font-['Liberation_Sans','Noto_Sans_CJK_SC',sans-serif] text-[4px] leading-[6px] text-[#222]">
      <TitleBar />
      <nav className="flex h-[7px] shrink-0 items-center bg-[#4d97e8] pl-[2px] text-white">
        {MENUS.map((name) => (
          <button key={name} className="w-[14px] text-left">{name}</button>
        ))}
      </nav>
      <MainToolbar />
      <div className="flex min-h-0 flex-1">
        <Sidebar />
        <Workspace />
        <StructureDock />
      </div>
    </div>
  );
}
